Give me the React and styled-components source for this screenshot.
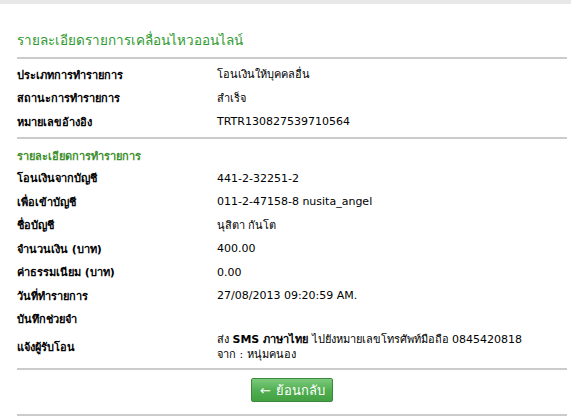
import React from "react";
import styled, { createGlobalStyle } from "styled-components";

const Global = createGlobalStyle`
  body {
    margin: 0;
    background: #fff;
    font-family: Tahoma, "DejaVu Sans", Verdana, sans-serif;
    font-size: 11px;
    color: #000;
  }
`;

const TopBand = styled.div`
  height: 4px;
  background: #e8e8e8;
`;

const Wrap = styled.div`
  padding: 26px 4px 0 17px;
`;

const Title = styled.h1`
  margin: 0;
  font-size: 13.5px;
  line-height: 20px;
  font-weight: normal;
  color: #2f9a2f;
`;

const Rule = styled.div`
  height: 2px;
  background: #cbcbcb;
  margin-top: ${(p) => p.$top || 0}px;
`;

const Block = styled.div`
  padding-top: ${(p) => p.$top || 0}px;
`;

const SubTitle = styled.div`
  font-weight: bold;
  color: #3d8f2c;
  line-height: 20px;
  padding-top: 8px;
`;

const Row = styled.div`
  display: grid;
  grid-template-columns: 200px 1fr;
  align-items: center;
  min-height: 23.5px;
  padding: ${(p) => (p.$multi ? "1px 0 2px" : "0")};
`;

const Label = styled.div`
  font-weight: bold;
`;

const Value = styled.div`
  line-height: 15px;
`;

const Footer = styled.div`
  display: flex;
  justify-content: center;
  padding: 8px 0 12px 0;
`;

const BackButton = styled.button`
  height: 24px;
  padding: 0 7px 0 8px;
  border: 1px solid #3b8a3b;
  border-radius: 2px;
  background: linear-gradient(#7cc97c, #4fae4f 55%, #43a043);
  color: #fff;
  font-family: Tahoma, "DejaVu Sans", Verdana, sans-serif;
  font-size: 13px;
  display: flex;
  align-items: center;
  gap: 5px;
  cursor: pointer;
`;

const top = [
  ["ประเภทการทำรายการ", "โอนเงินให้บุคคลอื่น"],
  ["สถานะการทำรายการ", "สำเร็จ"],
  ["หมายเลขอ้างอิง", "TRTR130827539710564"],
];

const detail = [
  ["โอนเงินจากบัญชี", "441-2-32251-2"],
  ["เพื่อเข้าบัญชี", "011-2-47158-8 nusita_angel"],
  ["ชื่อบัญชี", "นุสิตา กันโต"],
  ["จำนวนเงิน (บาท)", "400.00"],
  ["ค่าธรรมเนียม (บาท)", "0.00"],
  ["วันที่ทำรายการ", "27/08/2013 09:20:59 AM."],
  ["บันทึกช่วยจำ", ""],
];

export default function App() {
  return (
    <>
      <Global />
      <TopBand />
      <Wrap>
        <Title>รายละเอียดรายการเคลื่อนไหวออนไลน์</Title>
        <Rule $top={7} />
        <Block $top={4}>
          {top.map(([l, v]) => (
            <Row key={l}>
              <Label>{l}</Label>
              <Value>{v}</Value>
            </Row>
          ))}
        </Block>
        <Rule $top={3} />
        <SubTitle>รายละเอียดการทำรายการ</SubTitle>
        {detail.map(([l, v]) => (
          <Row key={l}>
            <Label>{l}</Label>
            <Value>{v}</Value>
          </Row>
        ))}
        <Row $multi>
          <Label>แจ้งผู้รับโอน</Label>
          <Value>
            ส่ง <b>SMS ภาษาไทย</b> ไปยังหมายเลขโทรศัพท์มือถือ 0845420818
            <br />
            จาก : หนุ่มคนอง
          </Value>
        </Row>
        <Rule $top={4} />
        <Footer>
          <BackButton>
            <span>←</span>
            <span>ย้อนกลับ</span>
          </BackButton>
        </Footer>
        <Rule />
      </Wrap>
    </>
  );
}
